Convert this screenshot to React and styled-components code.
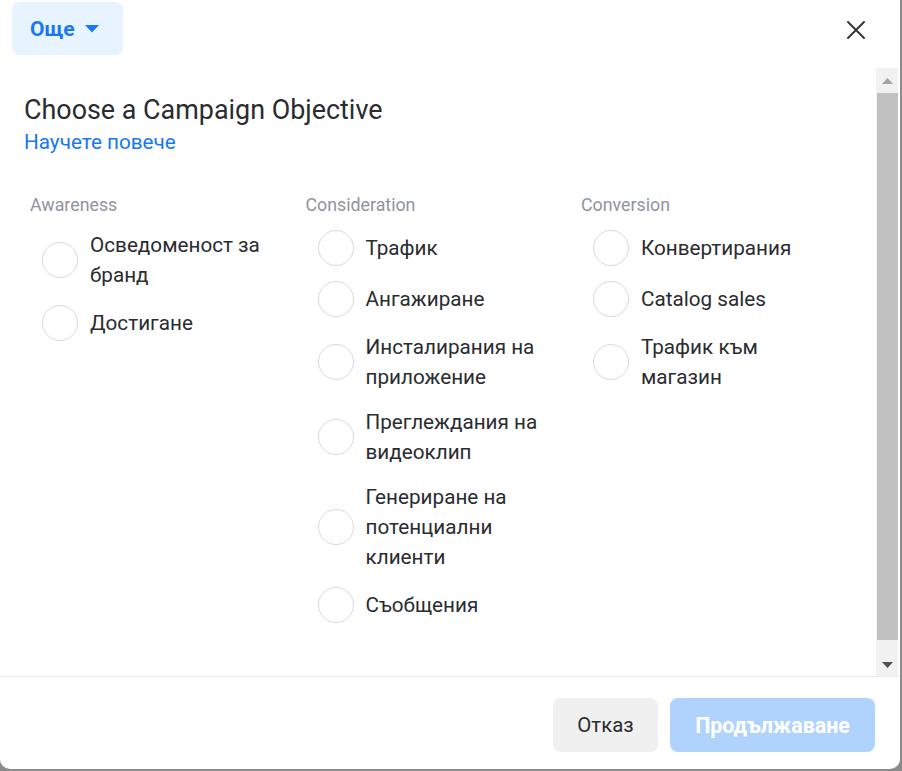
import React from "react";
import styled, { createGlobalStyle } from "styled-components";

const GlobalStyle = createGlobalStyle`
  html, body { margin: 0; padding: 0; }
  body {
    background: #8b8b8b;
    font-family: Roboto, "Noto Sans", "Liberation Sans", sans-serif;
    width: 902px;
    height: 771px;
    overflow: hidden;
  }
  * { box-sizing: border-box; }
`;

const Modal = styled.div`
  width: 900px;
  height: 769px;
  background: #ffffff;
  border-radius: 0 0 10px 10px;
  display: flex;
  flex-direction: column;
  overflow: hidden;
`;

const Header = styled.div`
  height: 68px;
  flex: none;
  display: flex;
  justify-content: space-between;
  align-items: flex-start;
  padding: 2px 34px 0 12px;
`;

const MoreButton = styled.button`
  width: 111px;
  height: 53px;
  border: none;
  border-radius: 8px;
  background: #e7f3ff;
  color: #1877f2;
  font-family: inherit;
  font-size: 21px;
  font-weight: 700;
  display: flex;
  align-items: center;
  gap: 10px;
  padding: 0 0 0 18px;
  cursor: pointer;
`;

const CloseButton = styled.button`
  margin-top: 18px;
  width: 20px;
  height: 20px;
  border: none;
  background: none;
  padding: 0;
  display: flex;
  align-items: center;
  justify-content: center;
  cursor: pointer;
`;

const Body = styled.div`
  height: 608px;
  flex: none;
  display: flex;
  padding-right: 2px;
`;

const Content = styled.div`
  flex: 1;
  padding: 27px 0 0 24px;
`;

const Title = styled.h2`
  margin: 0;
  font-size: 26.9px;
  font-weight: 400;
  line-height: 30px;
  color: #2a2c2f;
`;

const Link = styled.a`
  display: block;
  margin-top: 5px;
  font-size: 20.7px;
  line-height: 24px;
  color: #1877f2;
  text-decoration: none;
`;

const Columns = styled.div`
  margin-top: 41px;
  padding-left: 6px;
  display: grid;
  grid-template-columns: repeat(3, 275.5px);
`;

const Column = styled.div`
  display: flex;
  flex-direction: column;
`;

const ColumnLabel = styled.div`
  font-size: 17.8px;
  line-height: 20px;
  color: #90949c;
  margin-bottom: 15px;
`;

const Items = styled.div`
  display: flex;
  flex-direction: column;
  gap: 15px;
`;

const Item = styled.label`
  display: flex;
  align-items: center;
  cursor: pointer;
`;

const Radio = styled.span`
  flex: none;
  width: 36px;
  height: 36px;
  margin-left: 12px;
  border-radius: 50%;
  border: 1px solid #d8dadf;
  background: #fff;
`;

const ItemText = styled.span`
  margin-left: 12px;
  max-width: 182px;
  font-size: 20.7px;
  line-height: 30px;
  color: #2a2c2f;
`;

const Scrollbar = styled.div`
  width: 22px;
  flex: none;
  background: #f1f1f1;
  display: flex;
  flex-direction: column;
`;

const ScrollArrow = styled.div`
  height: ${(p) => p.$h}px;
  flex: none;
  display: flex;
  align-items: center;
  justify-content: center;
`;

const Thumb = styled.div`
  height: 547px;
  margin-left: 1px;
  background: #c1c1c1;
  flex: none;
`;

const Spacer = styled.div`
  flex: 1;
`;

const Footer = styled.div`
  flex: 1;
  border-top: 1px solid #ececec;
  display: flex;
  justify-content: flex-end;
  align-items: flex-start;
  gap: 12px;
  padding: 21px 25px 0 0;
`;

const FooterButton = styled.button`
  height: 54px;
  width: ${(p) => p.$w}px;
  border: none;
  border-radius: 8px;
  font-family: inherit;
  font-size: ${(p) => (p.$primary ? 21.4 : 20.4)}px;
  font-weight: ${(p) => (p.$primary ? 700 : 400)};
  background: ${(p) => (p.$primary ? "#b0d3fd" : "#f0f0f0")};
  color: ${(p) => (p.$primary ? "#ffffff" : "#2a2c2f")};
  cursor: pointer;
`;

const columns = [
  { label: "Awareness", items: ["Осведоменост за бранд", "Достигане"] },
  {
    label: "Consideration",
    items: [
      "Трафик",
      "Ангажиране",
      "Инсталирания на приложение",
      "Преглеждания на видеоклип",
      "Генериране на потенциални клиенти",
      "Съобщения",
    ],
  },
  { label: "Conversion", items: ["Конвертирания", "Catalog sales", "Трафик към магазин"] },
];

export default function App() {
  return (
    <>
      <GlobalStyle />
      <Modal>
        <Header>
          <MoreButton>
            Още
            <svg width="14" height="8" viewBox="0 0 14 8">
              <polygon points="0,0 14,0 7,7.5" fill="#1877f2" />
            </svg>
          </MoreButton>
          <CloseButton aria-label="Close">
            <svg width="18" height="18" viewBox="0 0 18 18">
              <path d="M1 1 L17 17 M17 1 L1 17" stroke="#333" strokeWidth="1.9" strokeLinecap="round" />
            </svg>
          </CloseButton>
        </Header>
        <Body>
          <Content>
            <Title>Choose a Campaign Objective</Title>
            <Link href="#">Научете повече</Link>
            <Columns>
              {columns.map((col) => (
                <Column key={col.label}>
                  <ColumnLabel>{col.label}</ColumnLabel>
                  <Items>
                    {col.items.map((it) => (
                      <Item key={it}>
                        <Radio />
                        <ItemText>{it}</ItemText>
                      </Item>
                    ))}
                  </Items>
                </Column>
              ))}
            </Columns>
          </Content>
          <Scrollbar>
            <ScrollArrow $h={25}>
              <svg width="11" height="6" viewBox="0 0 11 6">
                <polygon points="5.5,0 11,6 0,6" fill="#a3a3a3" />
              </svg>
            </ScrollArrow>
            <Thumb />
            <Spacer />
            <ScrollArrow $h={22}>
              <svg width="11" height="6" viewBox="0 0 11 6">
                <polygon points="0,0 11,0 5.5,6" fill="#505050" />
              </svg>
            </ScrollArrow>
          </Scrollbar>
        </Body>
        <Footer>
          <FooterButton $w={105}>Отказ</FooterButton>
          <FooterButton $w={205} $primary>
            Продължаване
          </FooterButton>
        </Footer>
      </Modal>
    </>
  );
}
